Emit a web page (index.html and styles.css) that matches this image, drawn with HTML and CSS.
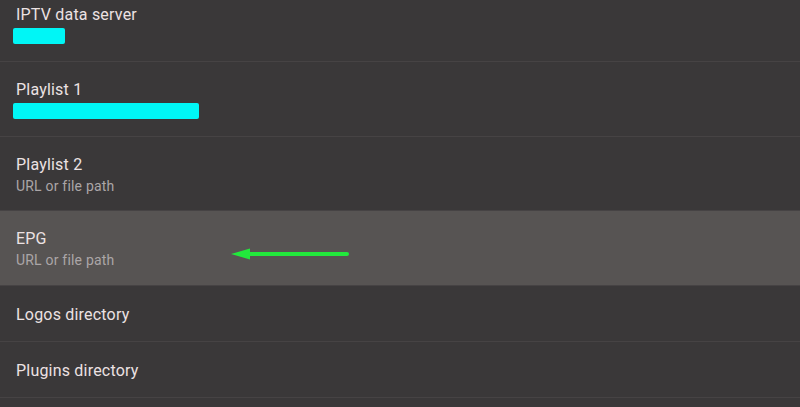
FILE: index.html
```html
<!DOCTYPE html>
<html lang="en">
<head>
    <meta charset="UTF-8">
    <title>Settings</title>
    <link rel="stylesheet" href="styles.css">
</head>
<body>
<div class="pref-list">
    <div class="pref pref-tall">
        <div class="pref-title">IPTV data server</div>
        <div class="redact" style="width: 52px"></div>
    </div>
    <div class="pref pref-tall">
        <div class="pref-title">Playlist 1</div>
        <div class="redact" style="width: 186px"></div>
    </div>
    <div class="pref pref-tall pref-short">
        <div class="pref-title">Playlist 2</div>
        <div class="pref-summary">URL or file path</div>
    </div>
    <div class="pref pref-tall selected">
        <div class="pref-title">EPG</div>
        <div class="pref-summary">URL or file path</div>
        <svg class="arrow" width="120" height="14" viewBox="0 0 120 14">
            <line x1="16" y1="7" x2="116" y2="7" stroke="#22e83c" stroke-width="4" stroke-linecap="round"/>
            <polygon points="0,7 19,1.5 19,12.5" fill="#22e83c"/>
        </svg>
    </div>
    <div class="pref">
        <div class="pref-title">Logos directory</div>
    </div>
    <div class="pref">
        <div class="pref-title">Plugins directory</div>
    </div>
    <div class="pref"></div>
</div>
</body>
</html>
```

FILE: styles.css
```css
body {
    margin: 0;
    background-color: #3a3839;
    font-family: Roboto, "Noto Sans", sans-serif;
    overflow: hidden;
}

.pref-list {
    margin-top: -13px;
}

/* 单行条目 */
.pref {
    position: relative;
    height: 52px;
    padding: 3px 16px 0;
    border-bottom: 1px solid #464344;
    display: flex;
    flex-direction: column;
    justify-content: center;
}

/* 标题 + 说明 */
.pref-tall {
    justify-content: flex-start;
    padding-top: 18px;
    height: 56px;
}

.pref-short {
    height: 55px;
}

.selected {
    background-color: #575453;
}

.pref-title {
    font-size: 16px;
    line-height: 20px;
    letter-spacing: 0.2px;
    color: #ece2e3;
}

.pref-summary {
    font-size: 14px;
    line-height: 18px;
    margin-top: 2px;
    letter-spacing: 0.2px;
    color: #aba6a7;
}

.redact {
    height: 16px;
    margin-top: 3px;
    margin-left: -3px;
    border-radius: 2px;
    background-color: #00f6f6;
}

.arrow {
    position: absolute;
    left: 231px;
    top: 36px;
}
```
